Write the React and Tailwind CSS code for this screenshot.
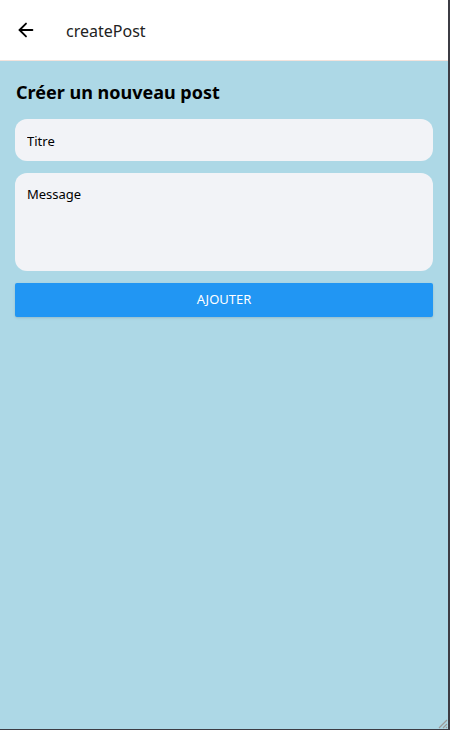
import { ArrowLeft } from "lucide-react";

const App = () => {
  return (
    <div
      className="relative flex h-[730px] w-[450px] flex-col border-r-2 border-b border-[#3c3c44] bg-[#add8e6]"
      style={{ fontFamily: '"Noto Sans", "Open Sans", sans-serif' }}
    >
      <header className="flex h-[61px] items-center border-b border-[#f3e3dc] bg-white">
        <button className="ml-[14px] flex h-6 w-6 items-center justify-center text-black">
          <ArrowLeft size={22} strokeWidth={2} />
        </button>
        <h1 className="ml-[28px] mt-[2px] text-[16px] text-[#222]">createPost</h1>
      </header>

      <div className="flex flex-col px-[15px] pt-[17px]">
        <h2 className="ml-px text-[18px] leading-[28px] font-bold text-black">Créer un nouveau post</h2>

        <div className="mt-[13px] flex flex-col gap-[12px]">
          <input
            type="text"
            placeholder="Titre"
            className="h-[42px] w-full rounded-[12px] bg-[#f2f3f7] px-[12px] pt-[1px] text-[13px] text-black placeholder:text-black focus:outline-none"
          />
          <textarea
            placeholder="Message"
            className="h-[98px] w-full resize-none rounded-[12px] bg-[#f2f3f7] px-[12px] pt-[12px] text-[13px] text-black placeholder:text-black focus:outline-none"
          />
          <button className="h-[34px] w-full rounded-[2px] bg-[#2196f3] text-[13px] text-white shadow-sm">
            AJOUTER
          </button>
        </div>
      </div>

      {/* window resize grip */}
      <svg className="absolute right-0 bottom-0 h-[12px] w-[12px]" viewBox="0 0 12 12">
        <path d="M11 3 L3 11 M11 7 L7 11 M11 10 L10 11" stroke="#9a9a9a" strokeWidth="1.2" />
      </svg>
    </div>
  );
};

export default App;
